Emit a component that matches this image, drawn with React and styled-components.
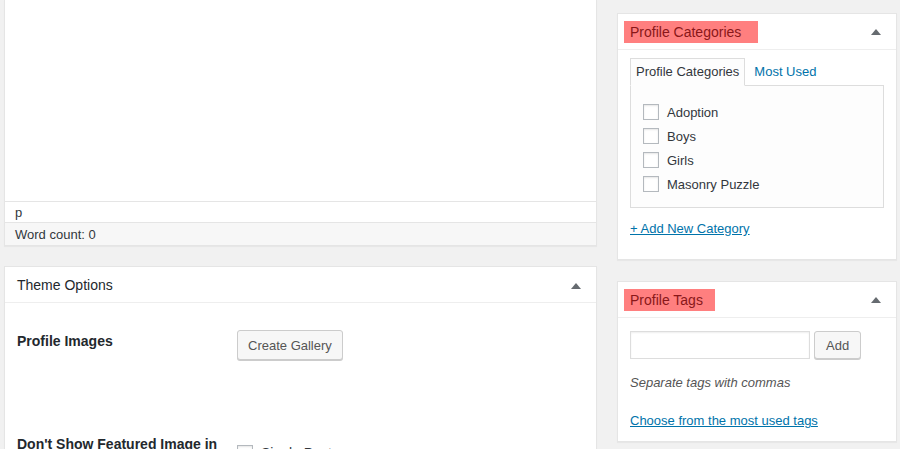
import styled, { createGlobalStyle } from "styled-components";

const GlobalStyle = createGlobalStyle`
  html, body {
    margin: 0;
    padding: 0;
    background: #f1f1f1;
    font-family: "Liberation Sans", Arial, sans-serif;
    font-size: 13px;
    color: #23282d;
  }
`;

const Page = styled.div`
  display: flex;
  align-items: flex-start;
  gap: 20px;
  padding-left: 4px;
  height: 449px;
  overflow: hidden;
`;

const MainColumn = styled.div`
  width: 593px;
  flex: none;
`;

const Sidebar = styled.div`
  width: 280px;
  flex: none;
  padding-top: 13px;
  display: flex;
  flex-direction: column;
  gap: 21px;
`;

const Editor = styled.div`
  border: 1px solid #e5e5e5;
  border-top: none;
  background: #fff;
  box-shadow: 0 1px 1px rgba(0, 0, 0, 0.04);
  margin-bottom: 20px;
`;

const EditorArea = styled.div`
  height: 201px;
`;

const PathBar = styled.div`
  border-top: 1px solid #e5e5e5;
  height: 20px;
  line-height: 22px;
  padding: 0 10px;
  color: #32373c;
`;

const StatusBar = styled.div`
  border-top: 1px solid #e5e5e5;
  height: 22px;
  line-height: 24px;
  padding: 0 10px;
  background: #f7f7f7;
  color: #32373c;
`;

const Postbox = styled.div`
  background: #fff;
  border: 1px solid #e5e5e5;
  box-shadow: 0 1px 1px rgba(0, 0, 0, 0.04);
`;

const BoxHeader = styled.div`
  display: flex;
  align-items: center;
  justify-content: space-between;
  border-bottom: 1px solid #eee;
  padding: ${(p) => (p.$marked ? "7px 15px 6px 6px" : "9px 15px 7px 12px")};
  font-size: 14px;
  line-height: ${(p) => (p.$marked ? "22px" : "19px")};
`;

const Marked = styled.span`
  background: #ff7f7f;
  color: #8a1719;
  line-height: 22px;
  padding: 0 ${(p) => p.$right || "6px"} 0 6px;
`;

const Toggle = () => (
  <svg width="10" height="6" viewBox="0 0 10 6">
    <path d="M5 0 L10 6 L0 6 Z" fill="#666b70" />
  </svg>
);

const OptionsGrid = styled.div`
  display: grid;
  grid-template-columns: 220px 1fr;
  padding: 27px 12px 0;
`;

const OptionRow = styled.div`
  display: contents;
`;

const OptionLabel = styled.div`
  font-size: 14px;
  font-weight: 700;
  line-height: 20px;
  padding-top: 1px;
  min-height: ${(p) => p.$height || "auto"};
`;

const OptionField = styled.div`
  display: flex;
  align-items: flex-start;
  gap: 8px;
  padding-top: ${(p) => p.$offset || "0"};
  color: #32373c;
  font-size: 14px;
`;

const Button = styled.button`
  font-family: inherit;
  font-size: 13px;
  color: #555;
  background: #f7f7f7;
  border: 1px solid #ccc;
  border-radius: 3px;
  box-shadow: 0 1px 0 #ccc;
  height: ${(p) => p.$height || "30px"};
  padding: 0 ${(p) => p.$pad || "10px"};
  line-height: 1;
  cursor: pointer;
`;

const Checkbox = styled.span`
  display: inline-block;
  width: 16px;
  height: 16px;
  box-sizing: border-box;
  border: 1px solid #b4b9be;
  background: #fff;
  box-shadow: inset 0 1px 2px rgba(0, 0, 0, 0.1);
  flex: none;
`;

const BoxBody = styled.div`
  padding: ${(p) => p.$padding};
`;

const Tabs = styled.div`
  display: flex;
  align-items: flex-end;
  gap: 10px;
  position: relative;
  z-index: 1;
`;

const Tab = styled.div`
  line-height: 20px;
  padding: 3px 5px;
  border: 1px solid ${(p) => (p.$active ? "#ddd" : "transparent")};
  border-bottom-color: ${(p) => (p.$active ? "#fdfdfd" : "transparent")};
  background: ${(p) => (p.$active ? "#fdfdfd" : "transparent")};
  color: ${(p) => (p.$active ? "#32373c" : "#0073aa")};
  margin-bottom: -1px;
  margin-left: ${(p) => (p.$active ? "0" : "-7px")};
`;

const TabPanel = styled.div`
  border: 1px solid #ddd;
  background: #fdfdfd;
  padding: 14px 12px 11px;
`;

const CategoryItem = styled.label`
  display: flex;
  align-items: center;
  gap: 8px;
  height: 24px;
  color: #32373c;
`;

const Link = styled.a`
  display: block;
  color: #0073aa;
  text-decoration: underline;
  line-height: ${(p) => p.$line || "20px"};
  margin-top: ${(p) => p.$top || "0"};
`;

const TagForm = styled.div`
  display: flex;
  gap: 4px;
`;

const TagInput = styled.input`
  width: 180px;
  height: 28px;
  box-sizing: border-box;
  border: 1px solid #ddd;
  box-shadow: inset 0 1px 2px rgba(0, 0, 0, 0.07);
  font-family: inherit;
  font-size: 13px;
  margin: 0;
`;

const Hint = styled.p`
  margin: 14px 0 0;
  font-style: italic;
  color: #555;
  line-height: 20px;
`;

const categories = ["Adoption", "Boys", "Girls", "Masonry Puzzle"];

export default function App() {
  return (
    <>
      <GlobalStyle />
      <Page>
        <MainColumn>
          <Editor>
            <EditorArea />
            <PathBar>p</PathBar>
            <StatusBar>Word count: 0</StatusBar>
          </Editor>

          <Postbox>
            <BoxHeader>
              <span>Theme Options</span>
              <Toggle />
            </BoxHeader>
            <OptionsGrid>
              <OptionRow>
                <OptionLabel $height="102px">Profile Images</OptionLabel>
                <OptionField>
                  <Button $pad="10px">Create Gallery</Button>
                </OptionField>
              </OptionRow>
              <OptionRow>
                <OptionLabel>Don't Show Featured Image in Single Post</OptionLabel>
                <OptionField $offset="12px">
                  <Checkbox />
                  <span>Single Post</span>
                </OptionField>
              </OptionRow>
            </OptionsGrid>
          </Postbox>
        </MainColumn>

        <Sidebar>
          <Postbox>
            <BoxHeader $marked>
              <Marked $right="17px">Profile Categories</Marked>
              <Toggle />
            </BoxHeader>
            <BoxBody $padding="8px 12px 19px">
              <Tabs>
                <Tab $active>Profile Categories</Tab>
                <Tab>Most Used</Tab>
              </Tabs>
              <TabPanel>
                {categories.map((c) => (
                  <CategoryItem key={c}>
                    <Checkbox />
                    {c}
                  </CategoryItem>
                ))}
              </TabPanel>
              <Link href="#" $top="10px" $line="22px">+ Add New Category</Link>
            </BoxBody>
          </Postbox>

          <Postbox>
            <BoxHeader $marked>
              <Marked $right="12px">Profile Tags</Marked>
              <Toggle />
            </BoxHeader>
            <BoxBody $padding="13px 12px 10px">
              <TagForm>
                <TagInput type="text" />
                <Button $height="28px" $pad="11px">Add</Button>
              </TagForm>
              <Hint>Separate tags with commas</Hint>
              <Link href="#" $top="18px">Choose from the most used tags</Link>
            </BoxBody>
          </Postbox>
        </Sidebar>
      </Page>
    </>
  );
}
